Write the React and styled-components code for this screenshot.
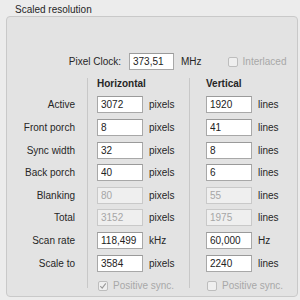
import React from "react";
import styled, { createGlobalStyle } from "styled-components";

const Global = createGlobalStyle`
  body {
    margin: 0;
    background: #ececec;
    font-family: "Liberation Sans", Arial, sans-serif;
    font-size: 10px;
    color: #262626;
  }
`;

const Page = styled.div`
  width: 300px;
  height: 300px;
  padding: 4px 0 0 6px;
  box-sizing: border-box;
  overflow: hidden;
`;

const Title = styled.div`
  line-height: 12px;
  padding-left: 9px;
`;

const Box = styled.div`
  width: 292px;
  height: 281px;
  box-sizing: border-box;
  border: 1px solid #c9c9c9;
  border-radius: 4px;
  background: #e3e3e3;
  padding-top: 36px;
`;

const ClockRow = styled.div`
  display: flex;
  align-items: center;
  height: 17px;
`;

const ClockLabel = styled.span`
  width: 114px;
  text-align: right;
  margin-right: 8px;
`;

const Field = styled.input`
  width: ${({ $w }) => $w || 46}px;
  height: 17px;
  box-sizing: border-box;
  margin: 0;
  padding: 0 0 0 3px;
  border: 1px solid #a8a8a8;
  border-top-color: #9a9a9a;
  background: #ffffff;
  font: inherit;
  font-size: 10px;
  color: #222;
  outline: none;
  &:disabled {
    background: #efefef;
    border-color: #c9c9c9;
    color: #a6a6a6;
  }
`;

const Unit = styled.span`
  margin-left: ${({ $gap }) => $gap || 6}px;
`;

const Check = styled.span`
  display: inline-flex;
  align-items: center;
  justify-content: center;
  width: 10px;
  height: 10px;
  box-sizing: border-box;
  border: 1px solid #bdbdbd;
  border-radius: 2px;
  background: #efefef;
  margin-left: ${({ $gap }) => $gap || 0}px;
`;

const CheckText = styled.span`
  margin-left: 5px;
  color: #a8a8a8;
`;

const Columns = styled.div`
  display: flex;
  margin-top: 8px;
`;

const Column = styled.div`
  display: flex;
  flex-direction: column;
  width: ${({ $w }) => $w}px;
  margin-left: ${({ $ml }) => $ml || 0}px;
`;

const Divider = styled.div`
  width: 1px;
  background: #c8c8c8;
  margin: 0 0 9px ${({ $ml }) => $ml}px;
`;

const Header = styled.div`
  height: 15.7px;
  line-height: 12px;
  font-weight: bold;
`;

const Row = styled.div`
  display: flex;
  align-items: center;
  justify-content: ${({ $right }) => ($right ? "flex-end" : "flex-start")};
  height: 22.6px;
  flex-shrink: 0;
`;

const rows = [
  ["Active", "3072", "pixels", "1920", "lines"],
  ["Front porch", "8", "pixels", "41", "lines"],
  ["Sync width", "32", "pixels", "8", "lines"],
  ["Back porch", "40", "pixels", "6", "lines"],
  ["Blanking", "80", "pixels", "55", "lines", true],
  ["Total", "3152", "pixels", "1975", "lines", true],
  ["Scan rate", "118,499", "kHz", "60,000", "Hz"],
  ["Scale to", "3584", "pixels", "2240", "lines"],
];

const Tick = () => (
  <svg width="8" height="8" viewBox="0 0 8 8">
    <path d="M1.3 4.2 L3.2 6.2 L6.8 1.3" fill="none" stroke="#9a9a9a" strokeWidth="1.1" />
  </svg>
);

function ValueColumn({ title, idx, unitIdx, ml, w, checked }) {
  return (
    <Column $w={w} $ml={ml}>
      <Header>{title}</Header>
      {rows.map((r) => (
        <Row key={r[0]}>
          <Field defaultValue={r[idx]} disabled={!!r[5]} />
          <Unit>{r[unitIdx]}</Unit>
        </Row>
      ))}
      <Row>
        <Check $gap={1}>{checked && <Tick />}</Check>
        <CheckText>Positive sync.</CheckText>
      </Row>
    </Column>
  );
}

export default function App() {
  return (
    <Page>
      <Global />
      <Title>Scaled resolution</Title>
      <Box>
        <ClockRow>
          <ClockLabel>Pixel Clock:</ClockLabel>
          <Field $w={45} defaultValue="373,51" />
          <Unit $gap={7}>MHz</Unit>
          <Check $gap={26} />
          <CheckText>Interlaced</CheckText>
        </ClockRow>
        <Columns>
          <Column $w={68}>
            <Header />
            {rows.map((r) => (
              <Row key={r[0]} $right>
                {r[0]}
              </Row>
            ))}
          </Column>
          <Divider $ml={12} />
          <ValueColumn title="Horizontal" idx={1} unitIdx={2} ml={9} w={92} checked />
          <Divider $ml={0} />
          <ValueColumn title="Vertical" idx={3} unitIdx={4} ml={16} w={80} />
        </Columns>
      </Box>
    </Page>
  );
}
